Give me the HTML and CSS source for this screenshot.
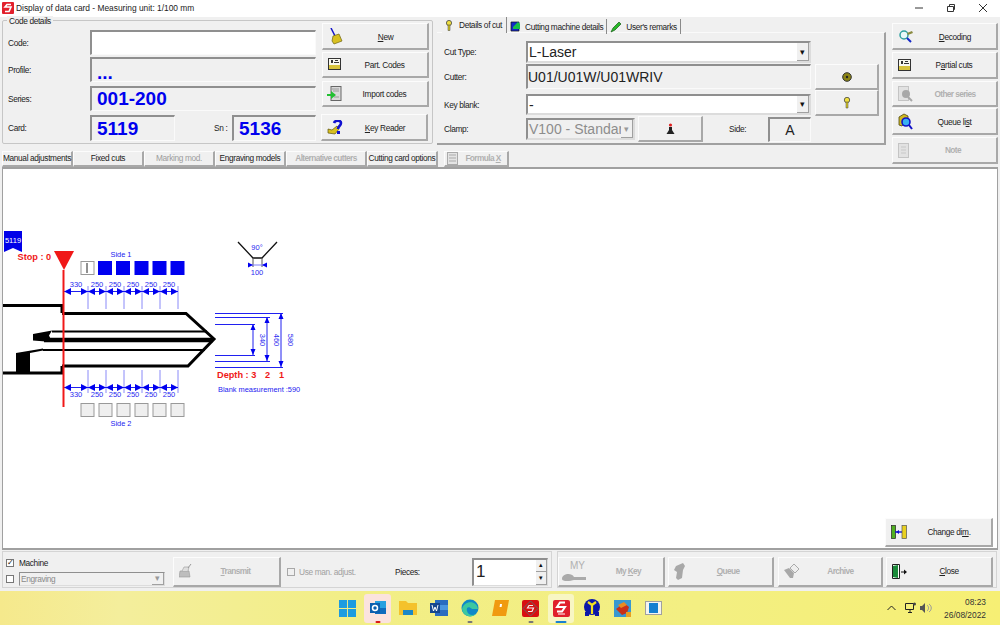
FILE: index.html
```html
<!DOCTYPE html>
<html lang="en">
<head>
<meta charset="utf-8">
<title>Display of data card</title>
<link rel="stylesheet" href="styles.css">
</head>
<body>
<div class="window">
  <header class="titlebar">
    <svg class="app-icon" width="12" height="12" viewBox="0 0 12 12"><rect width="12" height="12" rx="1" fill="#e2202c"/><path d="M9 2.500H5L3 5h6L7 9.500H3" fill="none" stroke="#fff" stroke-width="1.600"/></svg>
    <span class="title-text">Display of data card - Measuring unit: 1/100 mm</span>
    <div class="win-controls">
      <svg width="10" height="10" viewBox="0 0 10 10"><path d="M1 5h8" stroke="#333" fill="none"/></svg>
      <svg width="10" height="10" viewBox="0 0 10 10"><path d="M1.500 3.500h6v5h-6zM3.500 3.500V1.500h5v5h-1" stroke="#333" fill="none"/></svg>
      <svg width="10" height="10" viewBox="0 0 10 10"><path d="M1 1l8 8M9 1l-8 8" stroke="#333" fill="none"/></svg>
    </div>
  </header>

  <div class="upper">
    <div class="upper-main">
      <div class="top-row">
        <section class="code-group">
          <span class="legend">Code details</span>
          <div class="code-fields">
            <div class="f-row r-code"><label class="f-label">Code:</label><div class="field white wide"></div></div>
            <div class="f-row r-profile"><label class="f-label">Profile:</label><div class="field wide value dots">...</div></div>
            <div class="f-row r-series"><label class="f-label">Series:</label><div class="field wide value">001-200</div></div>
            <div class="f-row r-card"><label class="f-label">Card:</label><div class="field small value">5119</div><span class="sn-label">Sn :</span><div class="field small sn value">5136</div></div>
          </div>
          <div class="code-buttons">
            <button class="btn b-new nudge"><svg class="ic" width="16" height="18" viewBox="0 0 16 18"><path d="M3 0l4 8" stroke="#1414c8" stroke-width="1.500"/><path d="M5 8l6-2 3 7-8 3-2-3z" fill="#d8c020" stroke="#6d6410" stroke-width=".7"/></svg><span class="lbl"><u>N</u>ew</span></button>
            <button class="btn b-part"><svg class="ic" width="14" height="13" viewBox="0 0 14 13"><rect x=".5" y=".5" width="12" height="11" fill="#f8f8f0" stroke="#333"/><path d="M1 7h11v4H1z" fill="#d6c23c"/><path d="M3 2h2v3H3zM7 2h3v1H7zM6 4h5v1H6z" fill="#333"/></svg><span class="lbl">Part. Codes</span></button>
            <button class="btn b-import"><svg class="ic ic-import" width="15" height="16" viewBox="0 0 15 16"><rect x="4" y=".5" width="10" height="14" fill="#d9d9d9" stroke="#666"/><path d="M5 3h7M6 5h6M7 11h5" stroke="#999"/><path d="M0 8h4V5l5 4-5 4v-3H0z" fill="#22c032"/></svg><span class="lbl">Import codes</span></button>
            <button class="btn b-reader nudge"><svg class="ic" width="17" height="16" viewBox="0 0 17 16"><path d="M1 9l4 1 5-4 2 3-4 5-7-1z" fill="#d8c020" stroke="#5d5410" stroke-width=".7"/><path d="M7 3c1-3 7-3 7 0 0 3-3 3-3 6" fill="none" stroke="#1010d0" stroke-width="2.600"/><path d="M10 11h3v3h-3z" fill="#1010d0"/></svg><span class="lbl"><u>K</u>ey Reader</span></button>
          </div>
        </section>

        <section class="cut-tabs">
          <div class="tab-strip">
            <div class="tab active"><svg width="8" height="11" viewBox="0 0 8 11"><circle cx="4" cy="3" r="2.600" fill="#f0e040" stroke="#444" stroke-width=".8"/><path d="M3 5h2v5.500H3z" fill="#d8c820" stroke="#444" stroke-width=".5"/></svg><span>Details of cut</span></div>
            <div class="tab"><svg width="11" height="11" viewBox="0 0 11 11"><path d="M1 1h8v9H1z" fill="#1428c8" stroke="#111" stroke-width=".7"/><path d="M3 6l5-5 2 2v5H3z" fill="#18c048"/></svg><span>Cutting machine details</span></div>
            <div class="tab"><svg width="12" height="12" viewBox="0 0 12 12"><path d="M1 11l2-4 6-6 2 2-6 6z" fill="#28b828" stroke="#145a14" stroke-width=".7"/></svg><span>User's remarks</span></div>
          </div>
          <div class="tab-panel">
            <div class="cut-form">
              <div class="c-row r1"><label class="c-label">Cut Type:</label><div class="combo big"><span class="combo-text">L-Laser</span><span class="combo-arrow">▾</span></div></div>
              <div class="c-row r2"><label class="c-label">Cutter:</label><div class="field cutter">U01/U01W/U01WRIV</div></div>
              <div class="c-row r3"><label class="c-label">Key blank:</label><div class="combo big"><span class="combo-text">-</span><span class="combo-arrow">▾</span></div></div>
              <div class="c-row r4">
                <label class="c-label">Clamp:</label>
                <div class="combo clamp"><span class="combo-text">V100 - Standard</span><span class="combo-arrow off">▾</span></div>
                <button class="btn b-clamp"><svg width="9" height="12" viewBox="0 0 9 12"><circle cx="4.500" cy="2" r="1.600" fill="#e02020"/><path d="M3 4h3v3l2.500 4H.5L3 7z" fill="#222"/></svg></button>
                <span class="side-label">Side:</span>
                <div class="field side-box">A</div>
              </div>
            </div>
            <div class="cut-actions">
              <button class="btn b-square"><svg width="10" height="10" viewBox="0 0 10 10"><circle cx="5" cy="5" r="4.300" fill="#8b8414" stroke="#333"/><circle cx="5" cy="5" r="1.200" fill="#222"/></svg></button>
              <button class="btn b-square"><svg width="8" height="12" viewBox="0 0 8 12"><circle cx="4" cy="3" r="2.700" fill="#f0e040" stroke="#444" stroke-width=".8"/><path d="M3 5h2v6H3z" fill="#d8c820" stroke="#444" stroke-width=".5"/></svg></button>
            </div>
          </div>
        </section>
      </div>

      <nav class="tool-tabs">
        <button class="btn t1">Manual adjustments</button>
        <button class="btn t2">Fixed cuts</button>
        <button class="btn t3 off">Marking mod.</button>
        <button class="btn t4">Engraving models</button>
        <button class="btn t5 off faint">Alternative cutters</button>
        <button class="btn t6">Cutting card options</button>
        <button class="btn t7 off faint"><svg width="12" height="13" viewBox="0 0 12 13"><rect x=".5" y=".5" width="10" height="12" fill="#e4e4e4" stroke="#aaa"/><path d="M2 3h7M2 6h7M2 9h7" stroke="#aaa"/></svg><span class="lbl">Formula <u>X</u></span></button>
      </nav>
    </div>

    <aside class="side-buttons">
      <button class="btn s1 nudge"><svg class="ic" width="16" height="14" viewBox="0 0 16 14"><circle cx="6" cy="5" r="4" fill="#e8f8f8" stroke="#30a0a0" stroke-width="1.500"/><path d="M9 8l4 4" stroke="#1428c8" stroke-width="2"/><path d="M9 3l5-2 1 2-5 2z" fill="#8a8a40"/></svg><span class="lbl"><u>D</u>ecoding</span></button>
      <button class="btn s2"><svg class="ic" width="14" height="13" viewBox="0 0 14 13"><rect x=".5" y=".5" width="12" height="11" fill="#f8f8f0" stroke="#333"/><path d="M1 7h11v4H1z" fill="#d6c23c"/><path d="M3 2h2v3H3zM7 2h3v1H7zM6 4h5v1H6z" fill="#333"/></svg><span class="lbl">P<u>a</u>rtial cuts</span></button>
      <button class="btn s3 off faint"><svg class="ic" width="16" height="16" viewBox="0 0 16 16"><rect x=".5" y=".5" width="10" height="14" fill="#e2e2e2" stroke="#c4c4c4"/><circle cx="8" cy="8" r="4" fill="#a8a8a8"/><path d="M10 11l4 4" stroke="#a8a8a8" stroke-width="2"/></svg><span class="lbl">Other series</span></button>
      <button class="btn s4 nudge"><svg class="ic" width="15" height="17" viewBox="0 0 15 17"><path d="M1 4l5-3 4 2 0 3-6 7-3-1z" fill="#d0b820" stroke="#4d4610" stroke-width=".8"/><circle cx="8" cy="9" r="4" fill="#38b0f0" stroke="#1010c8" stroke-width="1.600"/><path d="M11 12l3 4" stroke="#1010c8" stroke-width="2"/></svg><span class="lbl">Queue li<u>s</u>t</span></button>
      <button class="btn s5 off faint"><svg class="ic" width="12" height="15" viewBox="0 0 12 15"><rect x=".5" y=".5" width="10" height="14" fill="#e2e2e2" stroke="#c4c4c4"/><path d="M3 4h5M3 7h5M3 10h5" stroke="#c8c8c8"/></svg><span class="lbl">Note</span></button>
    </aside>
  </div>

  <main class="canvas">
    <svg class="drawing" width="994" height="380" viewBox="3 168 994 380">
      <!-- flag -->
      <path d="M4 230h18v21l-9-4-9 4z" fill="#0000e8"/>
      <text class="t-flag" x="13" y="242" text-anchor="middle">5119</text>
      <text class="t-red" x="17.500" y="259">Stop : 0</text>
      <path d="M54 250h20l-10 19z" fill="#f01818"/>
      <text class="t-blue" x="121" y="256" text-anchor="middle">Side 1</text>
      <text class="t-blue" x="121" y="425" text-anchor="middle">Side 2</text>

      <!-- side squares -->
      <g>
        <rect x="81" y="260.500" width="13" height="13" fill="#fff" stroke="#999"/>
        <path d="M87 262v10" stroke="#222"/>
        <rect x="98" y="260" width="14" height="14" fill="#0000f0"/>
        <rect x="116" y="260" width="14" height="14" fill="#0000f0"/>
        <rect x="134.500" y="260" width="14" height="14" fill="#0000f0"/>
        <rect x="152.500" y="260" width="14" height="14" fill="#0000f0"/>
        <rect x="170.500" y="260" width="14" height="14" fill="#0000f0"/>
      </g>
      <g fill="#efefef" stroke="#999">
        <rect x="81" y="402.500" width="13" height="13"/>
        <rect x="99" y="402.500" width="13" height="13"/>
        <rect x="117" y="402.500" width="13" height="13"/>
        <rect x="135" y="402.500" width="13" height="13"/>
        <rect x="153" y="402.500" width="13" height="13"/>
        <rect x="171" y="402.500" width="13" height="13"/>
      </g>

      <!-- top dimensions -->
      <g class="dim-tick">
        <path d="M88 285v23M106 285v23M124 285v23M142 285v23M160 285v23M178 285v23"/>
      </g>
      <g class="dim-line">
        <path d="M64 290.500H178"/>
      </g>
      <g fill="#0000f0">
        <path d="M64 290.500l7-3.500v7zM88 290.500l-7-3.500v7zM88 290.500l7-3.500v7zM106 290.500l-7-3.500v7zM106 290.500l7-3.500v7zM124 290.500l-7-3.500v7zM124 290.500l7-3.500v7zM142 290.500l-7-3.500v7zM142 290.500l7-3.500v7zM160 290.500l-7-3.500v7zM160 290.500l7-3.500v7zM178 290.500l-7-3.500v7z"/>
      </g>
      <g class="t-dim">
        <text x="76" y="286" text-anchor="middle">330</text>
        <text x="97" y="286" text-anchor="middle">250</text>
        <text x="115" y="286" text-anchor="middle">250</text>
        <text x="133" y="286" text-anchor="middle">250</text>
        <text x="151" y="286" text-anchor="middle">250</text>
        <text x="169" y="286" text-anchor="middle">250</text>
      </g>

      <!-- bottom dimensions -->
      <g class="dim-tick">
        <path d="M88 369v23M106 369v23M124 369v23M142 369v23M160 369v23M178 369v23"/>
      </g>
      <g class="dim-line">
        <path d="M64 386.500H178"/>
      </g>
      <g fill="#0000f0">
        <path d="M64 386.500l7-3.500v7zM88 386.500l-7-3.500v7zM88 386.500l7-3.500v7zM106 386.500l-7-3.500v7zM106 386.500l7-3.500v7zM124 386.500l-7-3.500v7zM124 386.500l7-3.500v7zM142 386.500l-7-3.500v7zM142 386.500l7-3.500v7zM160 386.500l-7-3.500v7zM160 386.500l7-3.500v7zM178 386.500l-7-3.500v7z"/>
      </g>
      <g class="t-dim">
        <text x="76" y="396" text-anchor="middle">330</text>
        <text x="97" y="396" text-anchor="middle">250</text>
        <text x="115" y="396" text-anchor="middle">250</text>
        <text x="133" y="396" text-anchor="middle">250</text>
        <text x="151" y="396" text-anchor="middle">250</text>
        <text x="169" y="396" text-anchor="middle">250</text>
      </g>

      <!-- key -->
      <g fill="none" stroke="#000">
        <path d="M3 304.500H62V312M62 312.500H186L214 338 188 365H62M62 365v7H3" stroke-width="3"/>
        <path d="M52 330.500H207" stroke-width="2"/>
        <path d="M44 339H213" stroke-width="4.500"/>
        <path d="M43 349H205" stroke-width="2"/>
      </g>
      <path d="M33 333l19-3.500-3 5 3 6.500-19-1.500z" fill="#000"/>
      <path d="M16 352l27-4.500v2L30 352v20H16z" fill="#000"/>
      <path d="M63.500 269V406" stroke="#f01818" stroke-width="2" fill="none"/>

      <!-- depth dimensions -->
      <g class="dim-line">
        <path d="M215 312.500h68M215 316.500h55M215 323.500h40M215 354.500h40M215 360.500h55M215 366.500h68M253 323v31M267 316v44M281 312v54"/>
      </g>
      <g fill="#0000f0">
        <path d="M253 323l-2.500 6h5zM253 354l-2.500-6h5zM267 316l-2.500 6h5zM267 360l-2.500-6h5zM281 312l-2.500 6h5zM281 366l-2.500-6h5z"/>
      </g>
      <g class="t-dim">
        <text x="260" y="339" text-anchor="middle" transform="rotate(90 260 339)">340</text>
        <text x="274" y="339" text-anchor="middle" transform="rotate(90 274 339)">460</text>
        <text x="288" y="339" text-anchor="middle" transform="rotate(90 288 339)">580</text>
      </g>
      <text class="t-red" x="217" y="377">Depth : 3</text>
      <text class="t-red" x="265" y="377">2</text>
      <text class="t-red" x="279" y="377">1</text>
      <text class="t-blue" x="218" y="391">Blank measurement :590</text>

      <!-- cutter -->
      <path d="M238 241l15 16h9l15-16" fill="none" stroke="#111" stroke-width="1.300"/>
      <path d="M253 257v9M262 257v9" stroke="#555" fill="none"/>
      <path d="M248 264h19" stroke="#7f7ff8" fill="none"/>
      <path d="M253 264l-5-2.500v5zM262 264l5-2.500v5z" fill="#0000f0"/>
      <g class="t-dim">
        <text x="257" y="249" text-anchor="middle">90°</text>
        <text x="257" y="274" text-anchor="middle">100</text>
      </g>
    </svg>
    <button class="btn change-dim"><svg class="ic" width="16" height="14" viewBox="0 0 16 14"><rect x=".5" y=".5" width="4" height="13" fill="#50b020" stroke="#222" stroke-width=".7"/><path d="M4 7h7" stroke="#1010d0" stroke-width="1.400"/><path d="M5 7l3-2v4z" fill="#1010d0"/><rect x="11" y=".5" width="4.500" height="13" fill="#e8d020" stroke="#555" stroke-width=".7"/></svg><span class="lbl">Change di<u>m</u>.</span></button>
  </main>

  <footer class="bottom">
    <div class="bottom-left">
      <div class="machine-col">
        <div class="check-row"><span class="check on">✓</span><span class="check-label">Machine</span></div>
        <div class="check-row"><span class="check"></span><div class="combo engrave"><span class="combo-text">Engraving</span><span class="combo-arrow off">▾</span></div></div>
      </div>
      <button class="btn b-bottom transmit off faint"><svg class="ic" width="13" height="15" viewBox="0 0 13 15"><path d="M1 7h9l1 6H0z" fill="#bdbdbd" stroke="#999" stroke-width=".6"/><path d="M3 7l2-4h5l-1 4" fill="#dedede" stroke="#999" stroke-width=".6"/><path d="M9 4l3-4" stroke="#999"/></svg><span class="lbl"><u>T</u>ransmit</span></button>
      <div class="use-adj"><span class="check dis"></span><span class="use-label">Use man. adjust.</span></div>
      <span class="pieces-label">Pieces:</span>
      <div class="spin"><span class="spin-value">1</span><div class="spin-btns"><span class="spin-btn">▴</span><span class="spin-btn">▾</span></div></div>
    </div>
    <div class="bottom-right">
      <button class="btn b-bottom mykey off faint"><span class="my-mark"><span class="my-text">MY</span><svg width="26" height="10" viewBox="0 0 26 10"><path d="M0 8c0-5 9-7 12-2h12v3H12c-3 1-12 2-12-1z" fill="#aaa"/></svg></span><span class="lbl">My <u>K</u>ey</span></button>
      <button class="btn b-bottom queue off faint"><svg class="ic" width="11" height="17" viewBox="0 0 11 17"><path d="M2 3l7-3 2 3-2 4-1 8-4 2-2-2 1-6-3-2z" fill="#a8a8a8"/></svg><span class="lbl"><u>Q</u>ueue</span></button>
      <button class="btn b-bottom archive off faint"><svg class="ic" width="16" height="16" viewBox="0 0 16 16"><path d="M0 7l5-2 5 5-1 5H6z" fill="#a8a8a8"/><path d="M6 5l4-4 5 5-4 4z" fill="#eee" stroke="#aaa"/></svg><span class="lbl">Archive</span></button>
      <button class="btn b-bottom close"><svg class="ic" width="15" height="15" viewBox="0 0 15 15"><path d="M.5.500h7v14h-7z" fill="#fff" stroke="#222"/><path d="M1 2l5-1v13l-5-1z" fill="#1a8a3a"/><path d="M9 7.500h3v-2l3 2.500-3 2.500v-2H9z" fill="#111"/></svg><span class="lbl"><u>C</u>lose</span></button>
    </div>
  </footer>

  <div class="taskbar">
    <div class="task-icons">
      <div class="slot"><svg width="17" height="17" viewBox="0 0 18 18"><path d="M0 0h8.500v8.500H0zM9.500 0H18v8.500H9.500zM0 9.500h8.500V18H0zM9.500 9.500H18V18H9.500z" fill="#1c9ce0"/></svg></div>
      <div class="slot hl-pink"><svg width="18" height="18" viewBox="0 0 18 18"><path d="M6 2h11v13H6z" fill="#28a0e0"/><path d="M6 9h11v6H6z" fill="#0f6cbd"/><rect x="1" y="4" width="10" height="10" fill="#0c5fae"/><circle cx="6" cy="9" r="2.500" fill="none" stroke="#fff" stroke-width="1.500"/></svg><span class="dot red"></span></div>
      <div class="slot"><svg width="18" height="16" viewBox="0 0 18 16"><path d="M0 1h7l2 2h9v12H0z" fill="#f4c22c"/><path d="M4 10h10v5H4z" fill="#1a88c8"/></svg></div>
      <div class="slot"><svg width="18" height="16" viewBox="0 0 18 16"><path d="M5 0h13v16H5z" fill="#2a6cc0"/><path d="M5 5h13v5H5z" fill="#4a96e0"/><rect y="3" width="10" height="10" fill="#16478e"/><path d="M2 5l1.500 6L5 7l1.500 4L8 5" fill="none" stroke="#fff"/></svg></div>
      <div class="slot"><svg width="18" height="18" viewBox="0 0 18 18"><circle cx="9" cy="9" r="8.500" fill="#1088c8"/><path d="M1 10C3 1 16 1 17 10h-6c-3-3-6-2-5 2 1 4 5 5 9 3-4 4-13 3-14-5z" fill="#3cc8a0"/></svg><span class="dot gray"></span></div>
      <div class="slot"><svg width="17" height="16" viewBox="0 0 17 16"><path d="M3 0h14l-3 16H0z" fill="#f09a10"/><path d="M8 4h2l-.4 3H7.600z" fill="#fff"/></svg></div>
      <div class="slot"><svg width="17" height="17" viewBox="0 0 17 17"><rect width="17" height="17" rx="2" fill="#d81010"/><path d="M8.500 1L16 8.500 8.500 16 1 8.500z" fill="none" stroke="#666"/><path d="M11 5.500H7L5.500 8h6L10 11.500H6" fill="none" stroke="#eee" stroke-width="1.200"/></svg><span class="dot gray"></span></div>
      <div class="slot hl-pale"><svg width="17" height="17" viewBox="0 0 17 17"><rect width="17" height="17" rx="2" fill="#e0202c"/><path d="M12 2.500H7L4 7h8l-3 4.500H4" fill="none" stroke="#fff" stroke-width="2"/><path d="M5 14h7" stroke="#fff"/></svg><span class="dot blue"></span></div>
      <div class="slot"><svg width="18" height="18" viewBox="0 0 18 18"><path d="M2 13h4v4H2zM12 13h4v4h-4z" fill="#0c18a8"/><circle cx="9" cy="8" r="8" fill="#0c18a8"/><path d="M5 3l4 3 4-3M9 6v9" stroke="#f4e020" stroke-width="2.200" fill="none"/></svg></div>
      <div class="slot"><svg width="17" height="17" viewBox="0 0 17 17"><rect width="17" height="17" fill="#3898d0"/><path d="M2 9l8-6 5 4-2 6-5 2z" fill="#c83018"/><path d="M4 5l6-3 3 3-6 3z" fill="#e88a20"/><path d="M12 12h5v5h-5z" fill="#e8a020"/></svg></div>
      <div class="slot"><svg width="17" height="14" viewBox="0 0 17 14"><rect x=".5" y=".5" width="16" height="13" fill="#f4f4f0" stroke="#a0a0a0"/><rect x="4" y="2" width="9" height="10" fill="#1480d0"/></svg></div>
    </div>
    <div class="tray">
      <svg class="t-caret" width="9" height="6" viewBox="0 0 9 6"><path d="M.5 5l4-4 4 4" fill="none" stroke="#222"/></svg>
      <svg class="t-net" width="12" height="12" viewBox="0 0 12 12"><path d="M.5 1.500h8v6h-8zM3 10.500h4M5 8v2" fill="none" stroke="#222"/><circle cx="9.500" cy="2" r="1.500" fill="#444"/></svg>
      <svg class="t-vol" width="12" height="10" viewBox="0 0 12 10"><path d="M0 3h2l3-3v10L2 7H0z" fill="#555"/><path d="M7 2c2 1.500 2 4.500 0 6M9 1c3 2 3 6 0 8" fill="none" stroke="#999"/></svg>
      <div class="clock"><span>08:23</span><span>26/08/2022</span></div>
    </div>
  </div>
</div>
</body>
</html>
```

FILE: styles.css
```css
* { box-sizing: border-box; }
html, body { margin: 0; padding: 0; }
body {
  width: 1000px;
  height: 625px;
  overflow: hidden;
  background: #f0f0f0;
  font-family: "Liberation Sans", Arial, sans-serif;
  font-size: 8.3px;
  letter-spacing: -0.35px;
  color: #222;
}
.window { display: flex; flex-direction: column; width: 1000px; height: 625px; }

/* title bar */
.titlebar {
  display: flex;
  align-items: center;
  height: 17px;
  flex: none;
  padding: 0 0 2px 2px;
  background: #fff;
}
.app-icon { margin-right: 2px; }
.title-text { font-size: 8.4px; letter-spacing: 0; }
.win-controls {
  margin-left: auto;
  margin-right: 12px;
  display: flex;
  gap: 22px;
}

/* upper */
.upper { display: flex; height: 150px; flex: none; }
.upper-main { width: 892px; flex: none; display: flex; flex-direction: column; }
.top-row { display: flex; height: 128px; padding-left: 2px; }

.btn {
  display: flex;
  align-items: center;
  margin: 0;
  padding: 0;
  background: #f0f0f0;
  border: 0 solid #a8a8a8;
  border-right-width: 2px;
  border-bottom-width: 2px;
  border-top: 1px solid #fcfcfc;
  border-left: 1px solid #fcfcfc;
  font: inherit;
  letter-spacing: inherit;
  color: #222;
  white-space: nowrap;
}
.nudge { padding-top: 1px; }
.lbl { flex: 1; text-align: center; }
.ic { flex: none; margin-left: 5px; }
.off { color: #9d9d9d; }
.faint { font-weight: bold; color: #b0b0b0; letter-spacing: -0.6px; }

/* code group */
.code-group {
  position: relative;
  display: flex;
  width: 431px;
  height: 124px;
  margin-top: 3px;
  padding: 2px 3px 0 5px;
  border: 1px solid #c6c6c6;
  border-radius: 2px;
}
.legend {
  position: absolute;
  top: -5px;
  left: 4px;
  padding: 0 2px;
  background: #f0f0f0;
}
.code-fields { width: 314px; padding-top: 7px; }
.f-row { display: flex; align-items: center; }
.f-label { width: 82px; flex: none; }
.r-code { height: 25px; }
.r-profile { height: 25px; margin-top: 2px; }
.r-series { height: 25px; margin-top: 4px; }
.r-card { height: 26px; margin-top: 4px; }
.field {
  height: 100%;
  background: #f0f0f0;
  border-top: 2px solid #8f8f8f;
  border-left: 2px solid #8f8f8f;
  border-right: 1px solid #fafafa;
  border-bottom: 1px solid #fafafa;
}
.white { background: #fff; }
.wide { width: 226px; }
.small { width: 85px; }
.value {
  display: flex;
  align-items: center;
  padding-left: 5px;
  color: #0000ee;
  font-size: 19px;
  font-weight: bold;
  letter-spacing: 0;
}
.dots { font-size: 19px; align-items: flex-end; line-height: 17px; }
.sn-label { width: 57px; padding-left: 39px; flex: none; }
.sn { width: 84px; }

.code-buttons { width: 107px; margin-left: 6px; }
.code-buttons .btn { width: 107px; }
.b-new { height: 27px; }
.b-part { height: 26px; margin-top: 2px; }
.b-import { height: 26px; margin-top: 3px; }
.b-reader { height: 27px; margin-top: 7px; margin-left: -1px; }
.ic-import { margin-left: 4px; }

/* cut tabs */
.cut-tabs { width: 449px; margin-left: 4px; }
.tab-strip { display: flex; height: 15px; padding-left: 5px; }
.tab {
  display: flex;
  align-items: center;
  gap: 4px;
  padding: 0 3px;
  border-right: 1px solid #8a8a8a;
  height: 15px;
  margin-top: 2px;
}
.tab.active { margin-top: 0; height: 16px; padding: 0 4px 0 3px; gap: 6px; position: relative; z-index: 1; background: #f0f0f0; }
.tab-panel {
  display: flex;
  width: 449px;
  height: 113px;
  padding: 8px 0 0 7px;
  border-top: 1px solid #fafafa;
  border-right: 2px solid #a0a0a0;
  border-bottom: 2px solid #a0a0a0;
}
.cut-form { width: 367px; flex: none; }
.c-row { display: flex; align-items: center; }
.c-label { width: 82px; flex: none; }
.r1 { height: 22px; }
.r2 { height: 25px; margin-top: 1px; }
.r3 { height: 21px; margin-top: 5px; }
.r4 { height: 26px; margin-top: 1px; }
.combo {
  display: flex;
  align-items: center;
  justify-content: space-between;
  background: #fff;
  border: 2px solid #8f8f8f;
  border-right-color: #dcdcdc;
  border-bottom-color: #dcdcdc;
  overflow: hidden;
}
.big { width: 285px; height: 100%; font-size: 14px; letter-spacing: 0; }
.combo-text { padding-left: 1px; white-space: nowrap; overflow: hidden; flex: 1; }
.combo-arrow {
  flex: none;
  display: flex;
  align-items: center;
  justify-content: center;
  width: 12px;
  height: 100%;
  background: #f0f0f0;
  border-right: 1px solid #a0a0a0;
  border-bottom: 1px solid #a0a0a0;
  font-size: 9px;
  color: #111;
}
.combo-arrow.off { color: #999; }
.cutter { width: 285px; padding-left: 0; font-size: 14px; line-height: 22px; letter-spacing: 0; }
.clamp {
  width: 109px;
  height: 22px;
  background: #f0f0f0;
  font-size: 14px;
  letter-spacing: 0;
  color: #8d8d8d;
}
.b-clamp { width: 65px; height: 26px; margin-left: 3px; justify-content: center; }
.side-label { width: 65px; padding-left: 26px; flex: none; }
.side-box {
  width: 43px;
  height: 25px;
  display: flex;
  align-items: center;
  justify-content: center;
  font-size: 14px;
  letter-spacing: 0;
}
.cut-actions { margin: 23px 0 0 4px; }
.b-square { width: 64px; height: 26px; justify-content: center; }

/* tool tabs */
.tool-tabs { display: flex; height: 16px; margin-top: 6px; padding-left: 2px; }
.tool-tabs .btn { justify-content: center; height: 16px; padding-bottom: 1px; }
.t1, .t2, .t3, .t4, .t6 { width: 71px; }
.t5 { width: 81px; }
.tool-tabs .t7 { width: 65px; margin-left: 6px; padding-left: 2px; }

/* side buttons */
.side-buttons { width: 106px; padding-top: 6px; }
.side-buttons .btn { width: 106px; }
.s1 { height: 27px; }
.s2 { height: 27px; margin-top: 2px; }
.s3 { height: 26px; margin-top: 2px; }
.s4 { height: 27px; margin-top: 1px; }
.s5 { height: 27px; margin-top: 2px; }

/* canvas */
.canvas {
  position: relative;
  flex: none;
  width: 996px;
  height: 383px;
  margin-left: 2px;
  background: #fff;
  border: 1px solid #a0a0a0;
  border-top-width: 2px;
  border-bottom-width: 2px;
  overflow: hidden;
}
.drawing { display: block; letter-spacing: 0; }
.t-flag { font-size: 7.5px; fill: #fff; font-family: "Liberation Sans", Arial, sans-serif; }
.t-red { font-size: 9.2px; font-weight: bold; fill: #f01818; font-family: "Liberation Sans", Arial, sans-serif; }
.t-blue { font-size: 7.4px; fill: #1a1af0; font-family: "Liberation Sans", Arial, sans-serif; }
.t-dim text { font-size: 7.5px; fill: #2a2af0; font-family: "Liberation Sans", Arial, sans-serif; }
.dim-line path { fill: none; stroke: #2020f0; stroke-width: 1; }
.dim-tick path { fill: none; stroke: #8a8af8; stroke-width: 1; }
.change-dim {
  position: absolute;
  right: 4px;
  bottom: 1px;
  width: 108px;
  height: 29px;
}

/* bottom */
.bottom { display: flex; height: 39px; flex: none; padding: 1px 0 0 2px; }
.bottom-left, .bottom-right {
  display: flex;
  align-items: center;
  height: 37px;
  padding-top: 4px;
  border: 1px solid #d4d4d4;
}
.bottom-left { width: 550px; padding-left: 3px; }
.bottom-right { width: 440px; margin-left: 5px; padding-left: 0; }
.machine-col { width: 162px; flex: none; display: flex; flex-direction: column; gap: 2px; padding-top: 2px; margin-top: -4px; }
.check-row { display: flex; align-items: center; height: 14px; gap: 5px; }
.check {
  display: flex;
  align-items: center;
  justify-content: center;
  width: 8px;
  height: 8px;
  flex: none;
  background: #fff;
  border: 1px solid #777;
  font-size: 8px;
  line-height: 8px;
  color: #111;
}
.check.dis { background: #f0f0f0; border-color: #a8a8a8; }
.engrave { width: 146px; height: 14px; background: #f0f0f0; color: #8a8a8a; border-width: 1px; }
.b-bottom { width: 108px; height: 30px; }
.transmit { margin-left: 5px; }
.use-adj { display: flex; align-items: center; width: 104px; margin-left: 6px; gap: 4px; flex: none; color: #a0a0a0; }
.pieces-label { width: 77px; flex: none; margin-left: 4px; }
.spin {
  display: flex;
  width: 76px;
  height: 28px;
  background: #fff;
  border-top: 2px solid #8f8f8f;
  border-left: 2px solid #8f8f8f;
  border-right: 1px solid #dcdcdc;
  border-bottom: 1px solid #dcdcdc;
}
.spin-value { flex: 1; font-size: 17px; line-height: 24px; padding-left: 2px; letter-spacing: 0; }
.spin-btns { display: flex; flex-direction: column; width: 11px; }
.spin-btn {
  flex: 1;
  display: flex;
  align-items: center;
  justify-content: center;
  background: #f0f0f0;
  border-right: 1px solid #a0a0a0;
  border-bottom: 1px solid #a0a0a0;
  font-size: 7px;
  color: #111;
}
.bottom-right .b-bottom { width: 107px; margin-right: 3px; }
.bottom-right .queue { width: 106px; margin-right: 4px; }
.bottom-right .archive { width: 106px; }
.my-mark { display: flex; flex-direction: column; margin-left: 3px; line-height: 9px; font-weight: normal; }
.my-text { font-size: 10px; line-height: 10px; color: #b0b0b0; padding-left: 5px; letter-spacing: 0; }
.mykey .lbl { padding-left: 6px; }

/* taskbar */
.taskbar {
  flex: 1;
  display: flex;
  align-items: center;
  margin-top: 2px;
  background: linear-gradient(90deg, #f5e98c 0, #f4ee9c 12%, #f2ee86 35%, #f3ef82 70%, #f6ef74 100%);
}
.task-icons { display: flex; padding-left: 332px; }
.slot {
  position: relative;
  display: flex;
  align-items: center;
  justify-content: center;
  width: 30.6px;
  height: 29px;
  border-radius: 3px;
}
.hl-pink { background: #fbe3de; width: 27px; margin: 0 1.800px; }
.hl-pale { background: #f8f6c4; width: 26px; margin: 0 2.300px; }
.dot {
  position: absolute;
  bottom: 0;
  left: 50%;
  transform: translateX(-50%);
  width: 5px;
  height: 2px;
  border-radius: 1px;
}
.dot.red { background: #d81818; }
.dot.gray { background: #777; }
.dot.blue { background: #1a80d0; width: 11px; }
.tray { display: flex; align-items: center; margin-left: auto; padding-right: 14px; }
.t-net { margin-left: 9.500px; }
.t-vol { margin-left: 3px; }
.clock {
  display: flex;
  flex-direction: column;
  align-items: flex-end;
  width: 54px;
  gap: 3px;
  font-size: 8.4px;
  letter-spacing: 0;
  line-height: 10px;
  color: #333;
}
```
